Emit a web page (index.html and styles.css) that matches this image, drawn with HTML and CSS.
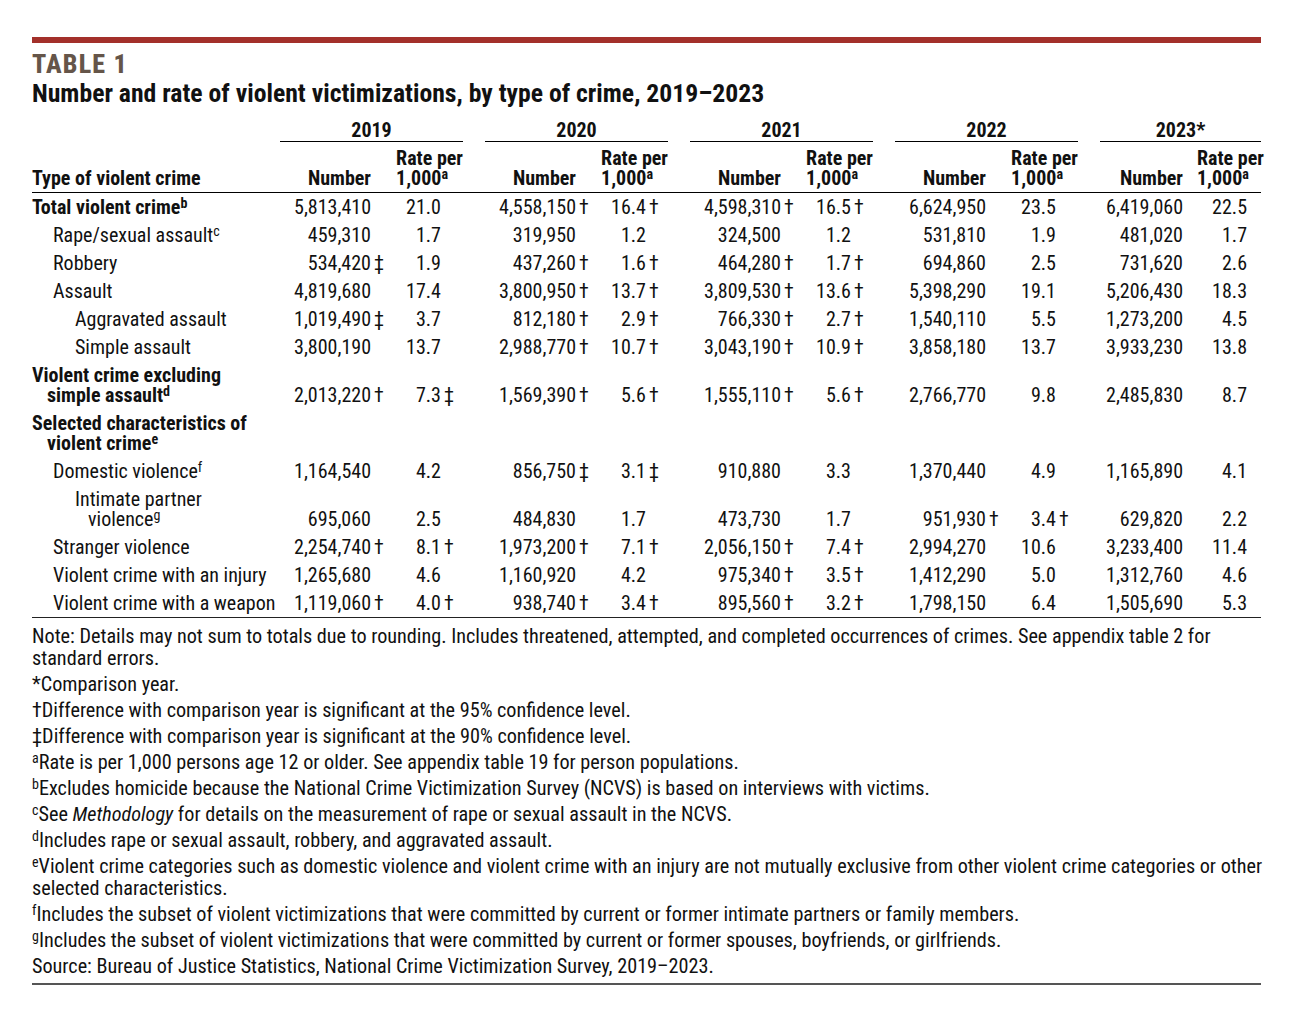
FILE: index.html
```html
<!DOCTYPE html>
<html lang="en">
<head>
<meta charset="utf-8">
<title>Table 1</title>
<link rel="stylesheet" href="styles.css">
</head>
<body>
<div class="page">
  <div class="bar"></div>
  <div class="kicker">TABLE 1</div>
  <h1 class="title">Number and rate of violent victimizations, by type of crime, 2019–2023</h1>

  <table class="data">
    <colgroup>
      <col class="c-label">
      <col class="c-num"><col class="c-rate">
      <col class="c-num"><col class="c-rate">
      <col class="c-num"><col class="c-rate">
      <col class="c-num"><col class="c-rate">
      <col class="c-num-last"><col class="c-rate-last">
    </colgroup>
    <thead>
      <tr class="years">
        <th></th>
        <th colspan="2"><div class="yl">2019</div></th>
        <th colspan="2"><div class="yl">2020</div></th>
        <th colspan="2"><div class="yl">2021</div></th>
        <th colspan="2"><div class="yl">2022</div></th>
        <th colspan="2"><div class="yl last">2023*</div></th>
      </tr>
      <tr class="sub">
        <th class="lab">Type of violent crime</th>
        <th class="hn">Number</th><th class="hr"><span class="rp">Rate per<br>1,000<sup>a</sup></span></th>
        <th class="hn">Number</th><th class="hr"><span class="rp">Rate per<br>1,000<sup>a</sup></span></th>
        <th class="hn">Number</th><th class="hr"><span class="rp">Rate per<br>1,000<sup>a</sup></span></th>
        <th class="hn">Number</th><th class="hr"><span class="rp">Rate per<br>1,000<sup>a</sup></span></th>
        <th class="hn">Number</th><th class="hr last"><span class="rp">Rate per<br>1,000<sup>a</sup></span></th>
      </tr>
    </thead>
    <tbody>
      <tr>
        <td class="lab b">Total violent crime<sup>b</sup></td>
        <td class="n">5,813,410<span class="m"></span></td><td class="r">21.0<span class="m"></span></td>
        <td class="n">4,558,150<span class="m">†</span></td><td class="r">16.4<span class="m">†</span></td>
        <td class="n">4,598,310<span class="m">†</span></td><td class="r">16.5<span class="m">†</span></td>
        <td class="n">6,624,950<span class="m"></span></td><td class="r">23.5<span class="m"></span></td>
        <td class="n">6,419,060<span class="m"></span></td><td class="r last">22.5<span class="m"></span></td>
      </tr>
      <tr>
        <td class="lab i1">Rape/sexual assault<sup>c</sup></td>
        <td class="n">459,310<span class="m"></span></td><td class="r">1.7<span class="m"></span></td>
        <td class="n">319,950<span class="m"></span></td><td class="r">1.2<span class="m"></span></td>
        <td class="n">324,500<span class="m"></span></td><td class="r">1.2<span class="m"></span></td>
        <td class="n">531,810<span class="m"></span></td><td class="r">1.9<span class="m"></span></td>
        <td class="n">481,020<span class="m"></span></td><td class="r last">1.7<span class="m"></span></td>
      </tr>
      <tr>
        <td class="lab i1">Robbery</td>
        <td class="n">534,420<span class="m">‡</span></td><td class="r">1.9<span class="m"></span></td>
        <td class="n">437,260<span class="m">†</span></td><td class="r">1.6<span class="m">†</span></td>
        <td class="n">464,280<span class="m">†</span></td><td class="r">1.7<span class="m">†</span></td>
        <td class="n">694,860<span class="m"></span></td><td class="r">2.5<span class="m"></span></td>
        <td class="n">731,620<span class="m"></span></td><td class="r last">2.6<span class="m"></span></td>
      </tr>
      <tr>
        <td class="lab i1">Assault</td>
        <td class="n">4,819,680<span class="m"></span></td><td class="r">17.4<span class="m"></span></td>
        <td class="n">3,800,950<span class="m">†</span></td><td class="r">13.7<span class="m">†</span></td>
        <td class="n">3,809,530<span class="m">†</span></td><td class="r">13.6<span class="m">†</span></td>
        <td class="n">5,398,290<span class="m"></span></td><td class="r">19.1<span class="m"></span></td>
        <td class="n">5,206,430<span class="m"></span></td><td class="r last">18.3<span class="m"></span></td>
      </tr>
      <tr>
        <td class="lab i2">Aggravated assault</td>
        <td class="n">1,019,490<span class="m">‡</span></td><td class="r">3.7<span class="m"></span></td>
        <td class="n">812,180<span class="m">†</span></td><td class="r">2.9<span class="m">†</span></td>
        <td class="n">766,330<span class="m">†</span></td><td class="r">2.7<span class="m">†</span></td>
        <td class="n">1,540,110<span class="m"></span></td><td class="r">5.5<span class="m"></span></td>
        <td class="n">1,273,200<span class="m"></span></td><td class="r last">4.5<span class="m"></span></td>
      </tr>
      <tr>
        <td class="lab i2">Simple assault</td>
        <td class="n">3,800,190<span class="m"></span></td><td class="r">13.7<span class="m"></span></td>
        <td class="n">2,988,770<span class="m">†</span></td><td class="r">10.7<span class="m">†</span></td>
        <td class="n">3,043,190<span class="m">†</span></td><td class="r">10.9<span class="m">†</span></td>
        <td class="n">3,858,180<span class="m"></span></td><td class="r">13.7<span class="m"></span></td>
        <td class="n">3,933,230<span class="m"></span></td><td class="r last">13.8<span class="m"></span></td>
      </tr>
      <tr>
        <td class="lab b hang">Violent crime excluding<br>simple assault<sup>d</sup></td>
        <td class="n">2,013,220<span class="m">†</span></td><td class="r">7.3<span class="m">‡</span></td>
        <td class="n">1,569,390<span class="m">†</span></td><td class="r">5.6<span class="m">†</span></td>
        <td class="n">1,555,110<span class="m">†</span></td><td class="r">5.6<span class="m">†</span></td>
        <td class="n">2,766,770<span class="m"></span></td><td class="r">9.8<span class="m"></span></td>
        <td class="n">2,485,830<span class="m"></span></td><td class="r last">8.7<span class="m"></span></td>
      </tr>
      <tr>
        <td class="lab b hang">Selected characteristics of<br>violent crime<sup>e</sup></td>
        <td class="n"></td><td class="r"></td>
        <td class="n"></td><td class="r"></td>
        <td class="n"></td><td class="r"></td>
        <td class="n"></td><td class="r"></td>
        <td class="n"></td><td class="r last"></td>
      </tr>
      <tr>
        <td class="lab i1">Domestic violence<sup>f</sup></td>
        <td class="n">1,164,540<span class="m"></span></td><td class="r">4.2<span class="m"></span></td>
        <td class="n">856,750<span class="m">‡</span></td><td class="r">3.1<span class="m">‡</span></td>
        <td class="n">910,880<span class="m"></span></td><td class="r">3.3<span class="m"></span></td>
        <td class="n">1,370,440<span class="m"></span></td><td class="r">4.9<span class="m"></span></td>
        <td class="n">1,165,890<span class="m"></span></td><td class="r last">4.1<span class="m"></span></td>
      </tr>
      <tr>
        <td class="lab i2 hang">Intimate partner<br>violence<sup>g</sup></td>
        <td class="n">695,060<span class="m"></span></td><td class="r">2.5<span class="m"></span></td>
        <td class="n">484,830<span class="m"></span></td><td class="r">1.7<span class="m"></span></td>
        <td class="n">473,730<span class="m"></span></td><td class="r">1.7<span class="m"></span></td>
        <td class="n">951,930<span class="m">†</span></td><td class="r">3.4<span class="m">†</span></td>
        <td class="n">629,820<span class="m"></span></td><td class="r last">2.2<span class="m"></span></td>
      </tr>
      <tr>
        <td class="lab i1">Stranger violence</td>
        <td class="n">2,254,740<span class="m">†</span></td><td class="r">8.1<span class="m">†</span></td>
        <td class="n">1,973,200<span class="m">†</span></td><td class="r">7.1<span class="m">†</span></td>
        <td class="n">2,056,150<span class="m">†</span></td><td class="r">7.4<span class="m">†</span></td>
        <td class="n">2,994,270<span class="m"></span></td><td class="r">10.6<span class="m"></span></td>
        <td class="n">3,233,400<span class="m"></span></td><td class="r last">11.4<span class="m"></span></td>
      </tr>
      <tr>
        <td class="lab i1">Violent crime with an injury</td>
        <td class="n">1,265,680<span class="m"></span></td><td class="r">4.6<span class="m"></span></td>
        <td class="n">1,160,920<span class="m"></span></td><td class="r">4.2<span class="m"></span></td>
        <td class="n">975,340<span class="m">†</span></td><td class="r">3.5<span class="m">†</span></td>
        <td class="n">1,412,290<span class="m"></span></td><td class="r">5.0<span class="m"></span></td>
        <td class="n">1,312,760<span class="m"></span></td><td class="r last">4.6<span class="m"></span></td>
      </tr>
      <tr class="lastrow">
        <td class="lab i1">Violent crime with a weapon</td>
        <td class="n">1,119,060<span class="m">†</span></td><td class="r">4.0<span class="m">†</span></td>
        <td class="n">938,740<span class="m">†</span></td><td class="r">3.4<span class="m">†</span></td>
        <td class="n">895,560<span class="m">†</span></td><td class="r">3.2<span class="m">†</span></td>
        <td class="n">1,798,150<span class="m"></span></td><td class="r">6.4<span class="m"></span></td>
        <td class="n">1,505,690<span class="m"></span></td><td class="r last">5.3<span class="m"></span></td>
      </tr>
    </tbody>
  </table>

  <div class="notes">
    <p>Note: Details may not sum to totals due to rounding. Includes threatened, attempted, and completed occurrences of crimes. See appendix table 2 for<br>standard errors.</p>
    <p>*Comparison year.</p>
    <p>†Difference with comparison year is significant at the 95% confidence level.</p>
    <p>‡Difference with comparison year is significant at the 90% confidence level.</p>
    <p><sup>a</sup>Rate is per 1,000 persons age 12 or older. See appendix table 19 for person populations.</p>
    <p><sup>b</sup>Excludes homicide because the National Crime Victimization Survey (NCVS) is based on interviews with victims.</p>
    <p><sup>c</sup>See <i>Methodology</i> for details on the measurement of rape or sexual assault in the NCVS.</p>
    <p><sup>d</sup>Includes rape or sexual assault, robbery, and aggravated assault.</p>
    <p><sup>e</sup>Violent crime categories such as domestic violence and violent crime with an injury are not mutually exclusive from other violent crime categories or other<br>selected characteristics.</p>
    <p><sup>f</sup>Includes the subset of violent victimizations that were committed by current or former intimate partners or family members.</p>
    <p><sup>g</sup>Includes the subset of violent victimizations that were committed by current or former spouses, boyfriends, or girlfriends.</p>
    <p>Source: Bureau of Justice Statistics, National Crime Victimization Survey, 2019–2023.</p>
  </div>
</div>
</body>
</html>
```

FILE: styles.css
```css
html, body {
  margin: 0;
  padding: 0;
  background: #fff;
}

body {
  font-family: "Roboto Condensed", "Noto Sans", sans-serif;
  font-stretch: condensed;
  color: #111;
}

.page {
  width: 1229px;
  margin: 37px 0 0 32px;
  padding-bottom: 30px;
}

.bar {
  height: 6px;
  background: #a3302a;
}

.kicker {
  margin-top: 7px;
  font-size: 26px;
  line-height: 29px;
  font-weight: 800;
  color: #655549;
  letter-spacing: 1.2px;
}

.title {
  margin: 0;
  font-size: 25.7px;
  line-height: 28px;
  font-weight: 700;
}

.data {
  margin-top: 13px;
  border-collapse: collapse;
  table-layout: fixed;
  width: 1229px;
  font-size: 20px;
  line-height: 20px;
}

.c-label { width: 248px; }
.c-num { width: 105px; }
.c-rate { width: 100px; }
.c-num-last { width: 97px; }
.c-rate-last { width: 64px; }

.data th, .data td {
  padding: 4px 0;
  vertical-align: bottom;
  white-space: nowrap;
}

.data th {
  font-weight: 700;
}

.years th {
  padding: 0;
}

.yl {
  margin-right: 22px;
  text-align: center;
  border-bottom: 1px solid #000;
  padding-bottom: 1px;
}

.yl.last {
  margin-right: 0;
}

.sub th {
  padding: 6px 0 4px;
  border-bottom: 1px solid #000;
}

.sub .lab {
  text-align: left;
}

.hn {
  text-align: right;
  padding-right: 14px !important;
}

.hr {
  text-align: right;
  padding-right: 22px !important;
}

.hr.last {
  padding-right: 0 !important;
}

.rp {
  display: inline-block;
  text-align: left;
}

.lab {
  text-align: left;
}

.lab.b {
  font-weight: 700;
}

.lab.i1 {
  padding-left: 21px;
}

.lab.i2 {
  padding-left: 43px;
}

.lab.hang {
  padding-left: 15px;
  text-indent: -15px;
}

.lab.i2.hang {
  padding-left: 56px;
  text-indent: -13px;
}

.n, .r {
  text-align: right;
}

.r {
  padding-right: 30px !important;
}

.r.last {
  padding-right: 0 !important;
}

.m {
  display: inline-block;
  width: 14px;
  padding-left: 3px;
  box-sizing: border-box;
  text-align: left;
}

.lastrow td {
  border-bottom: 1.5px solid #222;
}

sup {
  font-size: 14px;
  line-height: 0;
  vertical-align: 6px;
  font-weight: inherit;
}

.notes {
  padding-top: 7px;
  padding-bottom: 2px;
  border-bottom: 2px solid #555;
  font-size: 20.2px;
  line-height: 22px;
}

.notes p {
  margin: 0 0 4px;
  white-space: nowrap;
}

.notes sup {
  font-size: 14px;
  vertical-align: 6px;
}
```
